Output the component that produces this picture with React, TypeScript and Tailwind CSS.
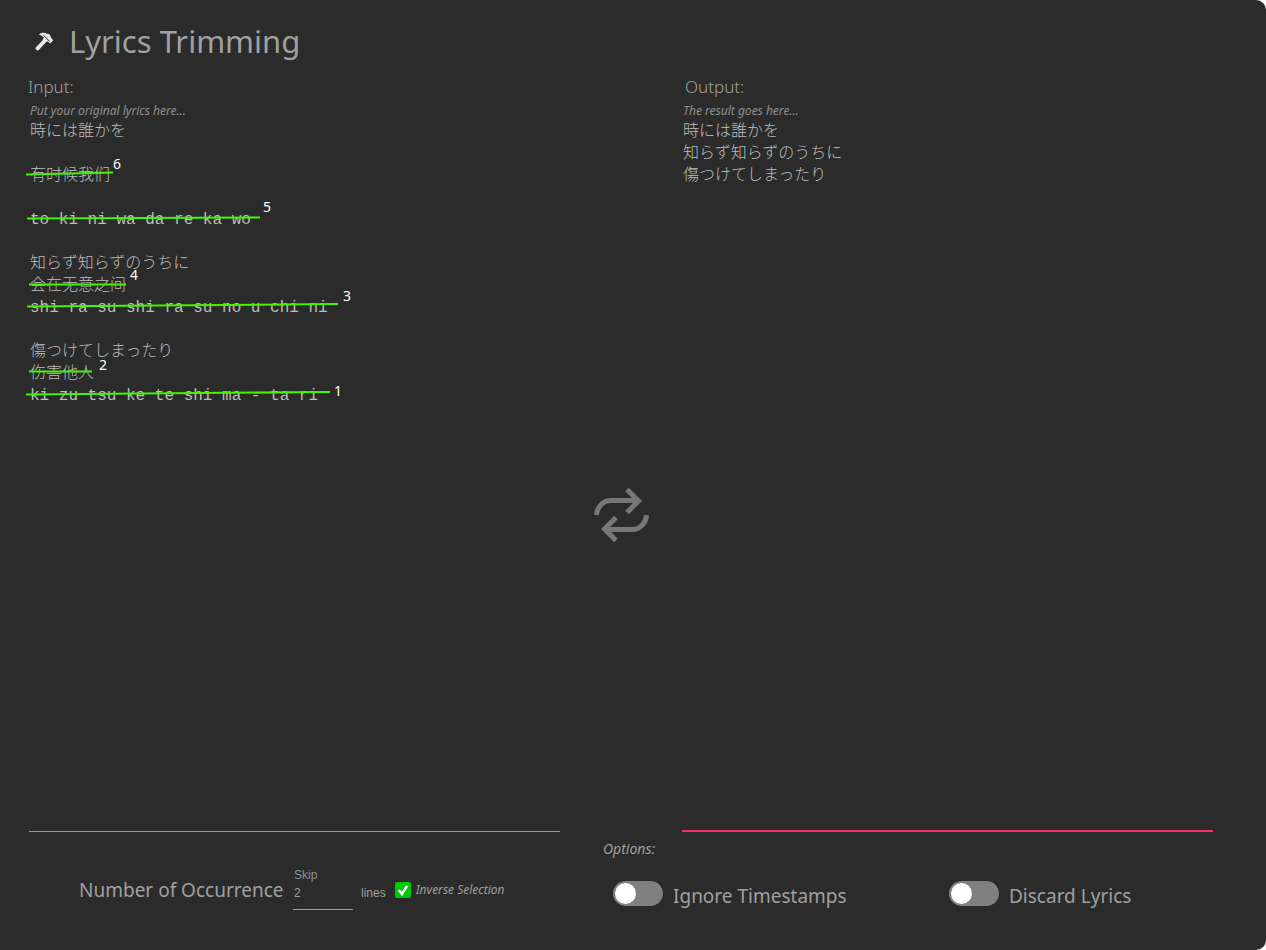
import React, { useState } from "react";

const INPUT_LYRICS = [
  "時には誰かを",
  "",
  "有时候我们",
  "",
  "to ki ni wa da re ka wo",
  "",
  "知らず知らずのうちに",
  "会在无意之间",
  "shi ra su shi ra su no u chi ni",
  "",
  "傷つけてしまったり",
  "伤害他人",
  "ki zu tsu ke te shi ma - ta ri",
].join("\n");

const OUTPUT_LYRICS = ["時には誰かを", "知らず知らずのうちに", "傷つけてしまったり"].join("\n");

const SANS = "font-['Noto_Sans','Noto_Sans_CJK_JP',sans-serif]";
const LYRICS =
  "block w-full flex-1 resize-none overflow-hidden bg-transparent pl-px pt-0.5 text-base font-light leading-[22px] text-[#bdbdbd] outline-none font-['Liberation_Mono','Noto_Sans_CJK_JP','Noto_Sans_CJK_SC',monospace]";

function StrikeMarks() {
  return (
    <>
      <svg
        className="pointer-events-none absolute -left-1 top-0"
        width="330"
        height="290"
        viewBox="25 119 330 290"
        stroke="#44f400"
        strokeWidth="2"
        aria-hidden="true"
      >
        <path d="M26 174.5 113 172.5M27 218.5 260 217.5M29 284.5H126M27 306.500 338 304M29 371.500H92M26 394.500 330 392" />
      </svg>
      <div className="pointer-events-none absolute left-0 top-0 text-sm leading-5 text-white">
        <span className="absolute left-[84px] top-[35px]">6</span>
        <span className="absolute left-[234px] top-[78px]">5</span>
        <span className="absolute left-[101px] top-[146px]">4</span>
        <span className="absolute left-[314px] top-[167px]">3</span>
        <span className="absolute left-[70px] top-[236px]">2</span>
        <span className="absolute left-[305px] top-[262px]">1</span>
      </div>
    </>
  );
}

function Toggle({ label }: { label: string }) {
  return (
    <label className="flex items-start gap-2.5 text-[19px] leading-7 text-[#a0a0a0]">
      <input
        type="checkbox"
        role="switch"
        className="h-[25px] w-[50px] shrink-0 appearance-none rounded-full bg-[#808080] p-0.5 before:block before:size-[21px] before:rounded-full before:bg-white checked:bg-[#00c800] checked:before:ml-auto"
      />
      <span className="pt-px">{label}</span>
    </label>
  );
}

export default function App() {
  const [input, setInput] = useState(INPUT_LYRICS);
  const [skip, setSkip] = useState("2");

  return (
    <div className="bg-white">
      <div className={`flex min-h-screen flex-col rounded-r-[10px] bg-[#2b2b2b] text-[#a0a0a0] ${SANS}`}>
        <header className="flex h-[75px] items-center gap-[15px] pl-[34px] pt-[7px]">
          <svg className="size-5" viewBox="0 0 20 20" fill="#e6e6e6" aria-hidden="true">
            <path d="M3.600 17.400 10.600 10" stroke="#e6e6e6" strokeWidth="4" strokeLinecap="round" />
            <path d="M4.800 3.400C7 1.400 11 1.400 13 2.800L15.500 3.300 17 6.500 19.200 9.200 16.200 12.600 13.300 10.300 10.500 11.500 8.500 9 9.800 6.500 7.500 4.800Z" />
            <path d="M9.500 4.200 15.800 10.600" stroke="#2b2b2b" strokeWidth="1" fill="none" />
          </svg>
          <h1 className="text-[31px] leading-10">Lyrics Trimming</h1>
        </header>

        <main className="grid flex-1 grid-cols-[1fr_122px_1fr] pl-[29px] pr-[53px]">
          <section className="flex flex-col border-b border-[#989898]">
            <label htmlFor="input-lyrics" className="-ml-px text-[17px] font-light leading-6">
              Input:
            </label>
            <p className="pl-px pt-1 text-xs italic leading-4 text-[#909090]">Put your original lyrics here...</p>
            <div className="relative flex flex-1 flex-col">
              <textarea
                id="input-lyrics"
                className={LYRICS}
                value={input}
                spellCheck={false}
                onChange={(e) => setInput(e.target.value)}
              />
              <StrikeMarks />
            </div>
          </section>

          <div className="flex items-center justify-center pl-0.5 pt-[122px]">
            <button type="button" aria-label="Convert lyrics" className="text-[#777]">
              <svg width="56" height="54" viewBox="0 0 56 54" fill="none" stroke="currentColor" strokeWidth="5">
                <path d="M2.500 27C3 19 9 12.500 17 12.500H45M33 1.500 44.500 13 33 24.500" />
                <path d="M52.500 27C52 35 46 41.500 38 41.500H11M22 29.500 10.500 41 22 52.500" />
              </svg>
            </button>
          </div>

          <section className="flex flex-col border-b-2 border-[#f82f65]">
            <label htmlFor="output-lyrics" className="pl-[3px] text-[17px] font-light leading-6">
              Output:
            </label>
            <p className="pl-px pt-1 text-xs italic leading-4 text-[#909090]">The result goes here...</p>
            <textarea id="output-lyrics" className={LYRICS} value={OUTPUT_LYRICS} readOnly spellCheck={false} />
          </section>
        </main>

        <footer className="grid h-[118px] grid-cols-[603px_1fr]">
          <div className="flex items-start pl-[79px] pt-9">
            <span className="mr-2 w-[206px] whitespace-nowrap pt-2 text-[19px] leading-7">Number of Occurrence</span>
            <div className="mr-2 flex w-[60px] flex-col font-['Liberation_Sans',sans-serif] text-xs">
              <label htmlFor="skip-lines" className="pl-px leading-[14px] text-[#909090]">
                Skip
              </label>
              <input
                id="skip-lines"
                className="h-7 w-full border-b border-[#a0a0a0] bg-transparent pb-1.5 pl-px outline-none"
                value={skip}
                onChange={(e) => setSkip(e.target.value)}
              />
            </div>
            <span className="mr-[9px] pt-[17px] font-['Liberation_Sans',sans-serif] text-xs leading-4">lines</span>
            <label className="flex items-center gap-[5px] pt-3.5 text-xs italic leading-4">
              <span className="relative flex">
                <input
                  type="checkbox"
                  defaultChecked
                  className="peer size-4 appearance-none rounded-xs bg-[#606060] checked:bg-[#00c800]"
                />
                <svg
                  className="pointer-events-none absolute inset-0 hidden size-4 peer-checked:block"
                  viewBox="0 0 16 16"
                  fill="none"
                  stroke="white"
                  strokeWidth="2.500"
                  aria-hidden="true"
                >
                  <path d="M3.800 8 7 12 12 3.800" />
                </svg>
              </span>
              Inverse Selection
            </label>
          </div>

          <fieldset className="pt-[7px]">
            <legend className="float-left w-full text-sm italic leading-5">Options:</legend>
            <div className="clear-both grid grid-cols-[336px_1fr] pl-2.5 pt-[22px]">
              <Toggle label="Ignore Timestamps" />
              <Toggle label="Discard Lyrics" />
            </div>
          </fieldset>
        </footer>
      </div>
    </div>
  );
}
